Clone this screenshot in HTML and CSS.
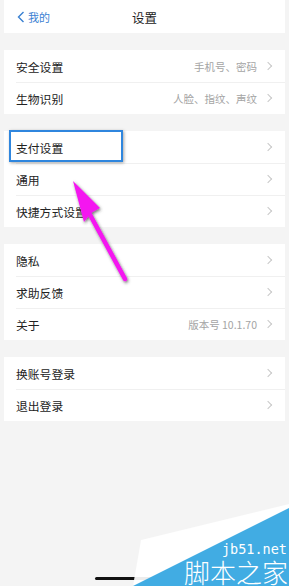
FILE: index.html
```html
<!DOCTYPE html>
<html lang="zh">
<head>
<meta charset="utf-8">
<link rel="stylesheet" href="styles.css">
</head>
<body>
<div class="screen">
  <header class="nav">
    <div class="back">
      <svg class="back-icon" width="8" height="12" viewBox="0 0 8 12"><path d="M6.5 1 L1.5 6 L6.5 11" fill="none" stroke="#3a80d2" stroke-width="1.4"/></svg>
      <span>我的</span>
    </div>
    <div class="title">设置</div>
  </header>

  <section class="group">
    <div class="row"><span class="label">安全设置</span><span class="value">手机号、密码</span><i class="chev"></i></div>
    <div class="row"><span class="label">生物识别</span><span class="value">人脸、指纹、声纹</span><i class="chev"></i></div>
  </section>

  <section class="group">
    <div class="row"><span class="label">支付设置</span><span class="value"></span><i class="chev"></i></div>
    <div class="row"><span class="label">通用</span><span class="value"></span><i class="chev"></i></div>
    <div class="row"><span class="label">快捷方式设置</span><span class="value"></span><i class="chev"></i></div>
  </section>

  <section class="group">
    <div class="row"><span class="label">隐私</span><span class="value"></span><i class="chev"></i></div>
    <div class="row"><span class="label">求助反馈</span><span class="value"></span><i class="chev"></i></div>
    <div class="row"><span class="label">关于</span><span class="value">版本号 10.1.70</span><i class="chev"></i></div>
  </section>

  <section class="group">
    <div class="row"><span class="label">换账号登录</span><span class="value"></span><i class="chev"></i></div>
    <div class="row"><span class="label">退出登录</span><span class="value"></span><i class="chev"></i></div>
  </section>

  <div class="home-bar"></div>

  <div class="highlight"></div>

  <svg class="arrow" width="289" height="586" viewBox="0 0 289 586">
    <defs>
      <filter id="sh" x="-50%" y="-50%" width="200%" height="200%">
        <feDropShadow dx="1" dy="1.5" stdDeviation="1.6" flood-color="#333" flood-opacity="0.7"/>
      </filter>
    </defs>
    <g filter="url(#sh)">
      <line x1="88" y1="211" x2="125" y2="279" stroke="#f414f0" stroke-width="4.5" stroke-linecap="round"/>
      <polygon points="73,181 100,208 91,213 84,222" fill="#f414f0"/>
    </g>
  </svg>

  <div class="watermark">
    <svg class="wm-bg" width="160" height="90" viewBox="0 0 160 90">
      <polygon points="4,90 12,44 160,8 160,90" fill="#ffffff" opacity="0.92"/>
      <polygon points="4,90 160,12 160,90" fill="#41ace3"/>
    </svg>
    <div class="wm-url">jb51.net</div>
    <div class="wm-name">脚本之家</div>
  </div>
</div>
</body>
</html>
```

FILE: styles.css
```css
* { box-sizing: border-box; margin: 0; padding: 0; }
html, body { width: 289px; height: 586px; overflow: hidden; }
body {
  background: #f4f4f4;
  font-family: "Noto Sans CJK SC", "Noto Sans", sans-serif;
  color: #222;
}
.screen {
  position: relative;
  width: 289px;
  height: 586px;
  padding: 0 4px;
  display: flex;
  flex-direction: column;
}
.nav {
  height: 33px;
  background: #fff;
  display: flex;
  align-items: center;
  justify-content: center;
  position: relative;
}
.back {
  position: absolute;
  left: 13px;
  top: 0;
  height: 33px;
  display: flex;
  align-items: center;
  gap: 3px;
  color: #3a80d2;
  font-size: 11px;
}
.back-icon { display: block; margin-top: 1px; }
.title {
  font-size: 12.5px;
  color: #222;
  margin-top: 2px;
}
.group {
  background: #fff;
  margin-top: 17px;
  display: flex;
  flex-direction: column;
}
.row {
  height: 32px;
  display: flex;
  align-items: center;
  padding: 0 13px 0 12px;
  position: relative;
}
.row + .row::before {
  content: "";
  position: absolute;
  left: 12px;
  right: 0;
  top: 0;
  border-top: 1px solid #f0f0f0;
}
.label {
  font-size: 11.8px;
  color: #222;
  flex: 1;
}
.value {
  font-size: 10.5px;
  color: #a4a4a4;
  margin-right: 8px;
}
.chev {
  width: 6px;
  height: 6px;
  border-top: 1px solid #c8c8c8;
  border-right: 1px solid #c8c8c8;
  transform: rotate(45deg);
  margin-right: 1px;
}
.home-bar {
  position: absolute;
  left: 95px;
  bottom: 6px;
  width: 100px;
  height: 3px;
  border-radius: 2px;
  background: #111;
}
.highlight {
  position: absolute;
  left: 9px;
  top: 130px;
  width: 114px;
  height: 32px;
  border: 2px solid #2f86de;
  box-shadow: 1px 1px 3px rgba(0,0,0,0.35);
}
.arrow {
  position: absolute;
  left: 0;
  top: 0;
  pointer-events: none;
}
.watermark {
  position: absolute;
  right: 0;
  bottom: 0;
  width: 160px;
  height: 90px;
}
.wm-bg { position: absolute; left: 0; top: 0; display: block; }
.wm-url {
  position: absolute;
  right: 2px;
  top: 47px;
  font-family: "DejaVu Sans Mono", "Liberation Mono", monospace;
  font-size: 13.5px;
  line-height: 12px;
  color: #fff;
}
.wm-name {
  position: absolute;
  right: 1px;
  bottom: 0;
  font-family: "Noto Sans CJK SC", sans-serif;
  font-weight: 300;
  font-size: 26px;
  color: #fff;
  line-height: 29px;
}
```
